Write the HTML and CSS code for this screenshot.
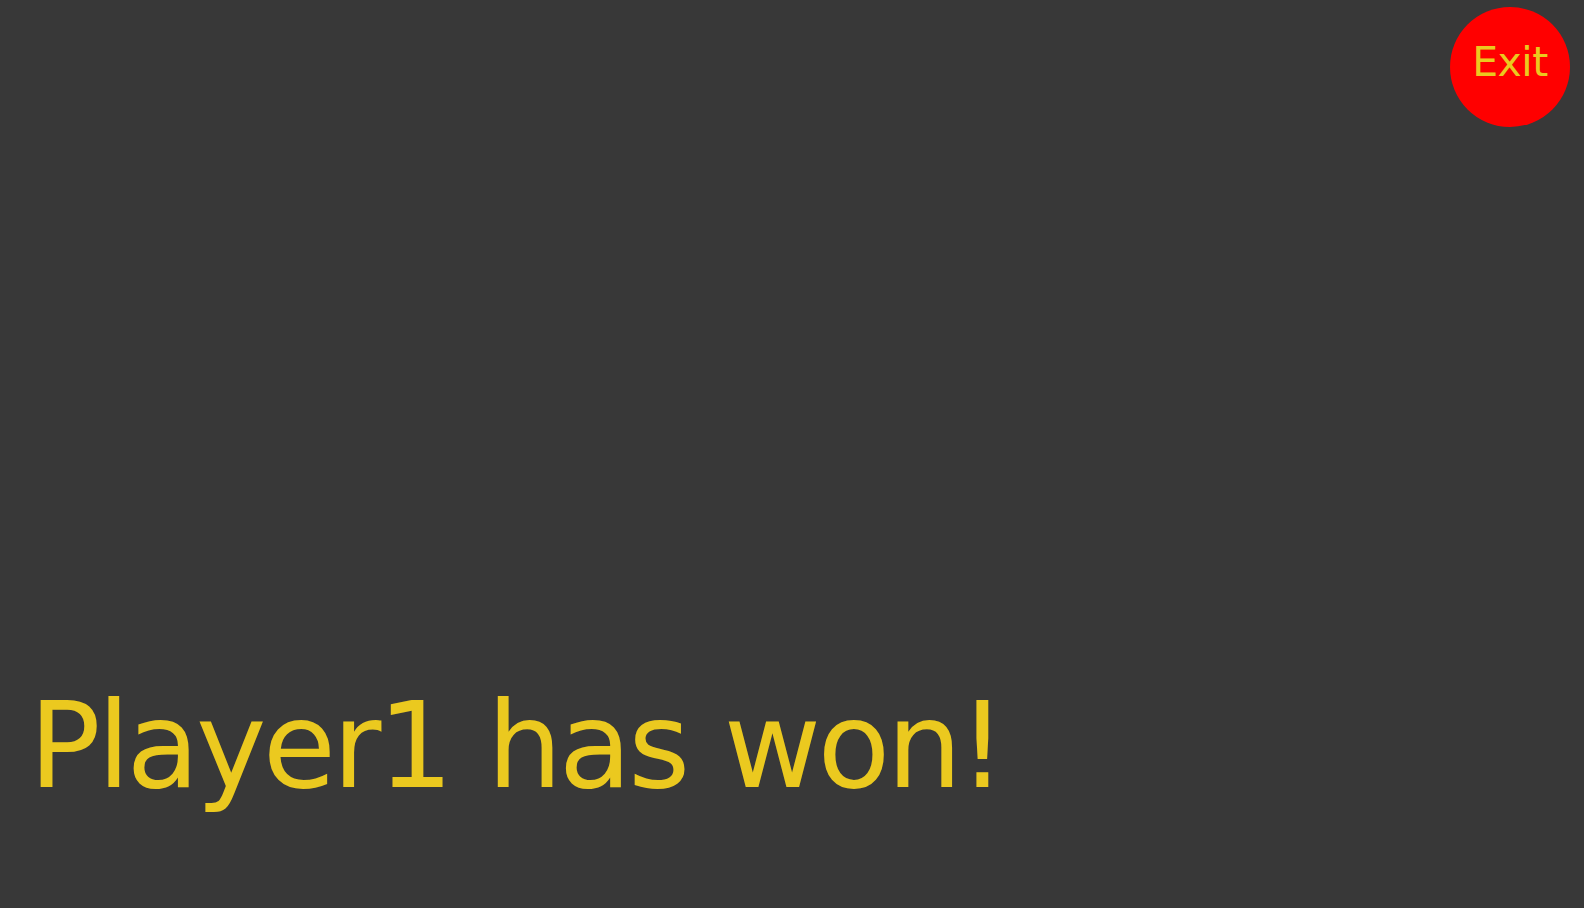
FILE: index.html
```html
<!DOCTYPE html>
<html lang="en">
<head>
<meta charset="utf-8">
<title>Game Over</title>
<link rel="stylesheet" href="styles.css">
</head>
<body>
<div class="screen">
  <div class="top-bar">
    <button class="exit-btn" type="button">Exit</button>
  </div>
  <div class="result">Player1 has won!</div>
</div>
</body>
</html>
```
FILE: styles.css
```css
html, body {
  margin: 0;
  padding: 0;
  background: #383838;
}

.screen {
  box-sizing: border-box;
  height: 908px;
  display: flex;
  flex-direction: column;
  padding: 7px 14px 102px 29px;
  font-family: "DejaVu Sans", "Liberation Sans", sans-serif;
}

.top-bar {
  display: flex;
  justify-content: flex-end;
}

.exit-btn {
  box-sizing: border-box;
  width: 120px;
  height: 120px;
  border-radius: 50%;
  border: none;
  background: #ff0000;
  color: #ebc91f;
  font-family: "DejaVu Sans", "Liberation Sans", sans-serif;
  font-size: 41px;
  letter-spacing: -0.5px;
  padding: 0 0 10px 0;
  display: flex;
  align-items: center;
  justify-content: center;
  cursor: pointer;
}

.result {
  margin-top: auto;
  font-size: 119px;
  line-height: 1;
  letter-spacing: -3.6px;
  word-spacing: 3px;
  color: #ebc91f;
  white-space: nowrap;
}
```
